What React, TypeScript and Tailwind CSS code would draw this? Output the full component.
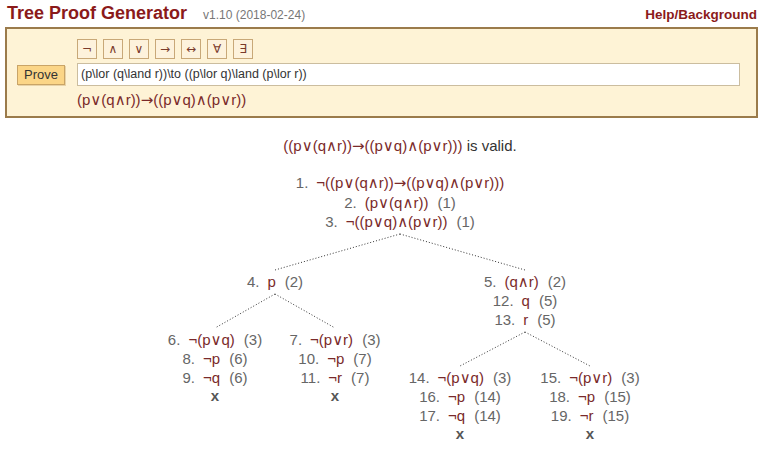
import React from "react"

type TNode = {
    lines: [string, string, string?][]
    closed?: boolean
    kids?: TNode[]
    kidW?: number
    kidClass?: string
    conn?: number
}

const tree: TNode = {
    lines: [
        ["1", "¬((p∨(q∧r))→((p∨q)∧(p∨r)))"],
        ["2", "(p∨(q∧r))", "1"],
        ["3", "¬((p∨q)∧(p∨r))", "1"],
    ],
    kidW: 250,
    kidClass: "w-[250px]",
    conn: 41,
    kids: [
        {
            lines: [["4", "p", "2"]],
            kidW: 120,
            kidClass: "w-[120px]",
            conn: 39,
            kids: [
                {
                    lines: [
                        ["6", "¬(p∨q)", "3"],
                        ["8", "¬p", "6"],
                        ["9", "¬q", "6"],
                    ],
                    closed: true,
                },
                {
                    lines: [
                        ["7", "¬(p∨r)", "3"],
                        ["10", "¬p", "7"],
                        ["11", "¬r", "7"],
                    ],
                    closed: true,
                },
            ],
        },
        {
            lines: [
                ["5", "(q∧r)", "2"],
                ["12", "q", "5"],
                ["13", "r", "5"],
            ],
            kidW: 130,
            kidClass: "w-[130px]",
            conn: 39,
            kids: [
                {
                    lines: [
                        ["14", "¬(p∨q)", "3"],
                        ["16", "¬p", "14"],
                        ["17", "¬q", "14"],
                    ],
                    closed: true,
                },
                {
                    lines: [
                        ["15", "¬(p∨r)", "3"],
                        ["18", "¬p", "15"],
                        ["19", "¬r", "15"],
                    ],
                    closed: true,
                },
            ],
        },
    ],
}

const symbols = ["¬", "∧", "∨", "→", "↔", "∀", "∃"]

// arrow from Liberation sits too low, take DejaVu's
const Formula = ({ f }: { f: string }) => {
    const parts = f.split("→")
    return (
        <>
            {parts.map((p, i) => (
                <React.Fragment key={i}>
                    {i > 0 && <span className="font-['DejaVu_Sans',sans-serif]">→</span>}
                    {p}
                </React.Fragment>
            ))}
        </>
    )
}

const Tree = ({ node }: { node: TNode }) => {
    const kids = node.kids || []
    const w = (node.kidW || 0) * kids.length
    const h = node.conn || 39
    return (
        <div className="flex flex-col items-center">
            {node.lines.map(([n, f, a]) => (
                <div key={n} className="whitespace-nowrap leading-[19px]">
                    <span className="text-[#666]">{n}.</span>
                    <span className="ml-[8px] text-[#7a2a2a]">
                        <Formula f={f} />
                    </span>
                    {a && <span className="ml-[9px] text-[#666]">({a})</span>}
                </div>
            ))}
            {node.closed && <div className="font-bold text-[#555] leading-[17px]">x</div>}
            {kids.length > 0 && (
                <>
                    <svg width={w} height={h} className="block">
                        {kids.map((_, i) => (
                            <line
                                key={i}
                                x1={w / 2}
                                y1={3}
                                x2={(node.kidW || 0) * (i + 0.5)}
                                y2={h - 2}
                                stroke="#333"
                                strokeWidth={1}
                                strokeDasharray="1 2"
                            />
                        ))}
                    </svg>
                    <div className="flex items-start">
                        {kids.map((k, i) => (
                            <div key={i} className={`${node.kidClass} flex justify-center`}>
                                <Tree node={k} />
                            </div>
                        ))}
                    </div>
                </>
            )}
        </div>
    )
}

const App = () => {
    return (
        <div className="w-[768px] h-[462px] bg-white font-['Liberation_Sans','DejaVu_Sans',Arial,sans-serif] text-[#333] overflow-hidden">
            <header className="h-[27px] flex items-baseline pl-[7px] pr-[11px] leading-[27px]">
                <h1 className="text-[18px] font-bold text-[#8b1a1a]">Tree Proof Generator</h1>
                <span className="ml-[16px] text-[12px] text-[#777]">v1.10 (2018-02-24)</span>
                <a className="ml-auto text-[13.5px] font-bold text-[#8b1a1a]">Help/Background</a>
            </header>

            <div className="mx-[5px] w-[753px] border-2 border-[#9b7b4b] bg-[#fef3d6] pl-[10px] pr-[16px] pt-[10px] pb-[6px] grid grid-cols-[48px_1fr] grid-rows-[20px_23px_20px] gap-x-[12px] gap-y-[4px]">
                <div />
                <div className="flex gap-[6px]">
                    {symbols.map((s) => (
                        <button
                            key={s}
                            className="w-[20px] h-[20px] border border-[#c8a878] bg-[#fdf2dc] font-['DejaVu_Sans',sans-serif] text-[12px] leading-[18px] text-[#7a3a2a] flex items-center justify-center"
                        >
                            {s}
                        </button>
                    ))}
                </div>
                <button className="h-[20px] w-[48px] self-center border border-[#c9a467] bg-[#fbd587] text-[13px] text-[#333] leading-[18px] shadow-[1px_1px_0_#e8d3a8]">
                    Prove
                </button>
                <div className="h-[23px] border border-[#cbbd9f] bg-white pl-[3px] text-[12.5px] leading-[21px] text-[#333] whitespace-nowrap overflow-hidden">
                    (p\lor (q\land r))\to ((p\lor q)\land (p\lor r))
                </div>
                <div />
                <div className="text-[15px] leading-[20px] text-[#7a2a2a]">
                    <Formula f="(p∨(q∧r))→((p∨q)∧(p∨r))" />
                </div>
            </div>

            <main className="pl-[32px] mt-[18px] flex flex-col items-center text-[15px]">
                <p className="leading-[19px]">
                    <span className="text-[#7a2a2a]">
                        <Formula f="((p∨(q∧r))→((p∨q)∧(p∨r)))" />
                    </span>{" "}
                    is valid.
                </p>
                <div className="mt-[17px]">
                    <Tree node={tree} />
                </div>
            </main>
        </div>
    )
}

export default App
